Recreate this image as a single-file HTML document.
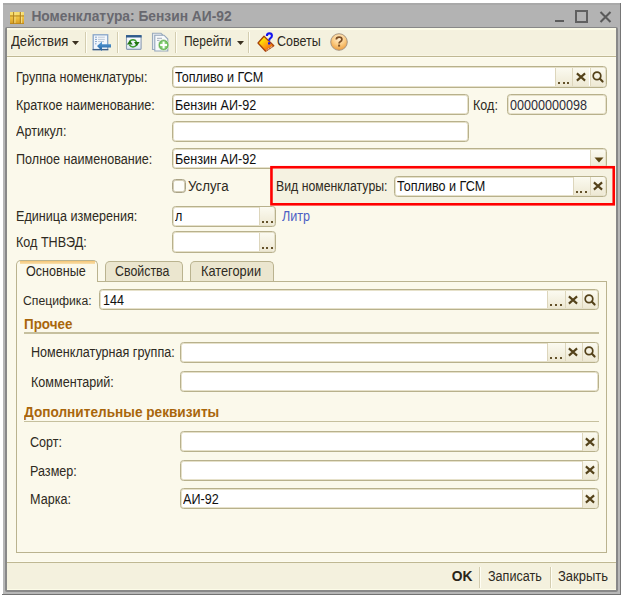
<!DOCTYPE html><html><head><meta charset="utf-8"><style>
html,body{margin:0;padding:0;width:623px;height:597px;overflow:hidden;background:#fff;}
body{position:relative;font-family:"Liberation Sans",sans-serif;}
#w{position:absolute;left:0;top:0;width:623px;height:597px;background:#fff;}
.a{position:absolute;box-sizing:border-box;}
.t{position:absolute;white-space:nowrap;transform-origin:0 0;}
.fld{border:1px solid #b8b18c;border-radius:3.5px;box-shadow:inset 0 0 0 1px #e6e1ca;}
.btn{background:linear-gradient(#fbfaf0,#eee9d4);border-left:1px solid #ddd6bc;}
.btn.last{border-radius:0 2px 2px 0;}
.dot{width:2px;height:2px;background:#64522a;}
</style></head><body><div id="w">
<div class="a" style="left:3px;top:3px;width:617px;height:591px;background:#b7b7b7;"></div>
<div class="a" style="left:620px;top:3px;width:1px;height:592px;background:#767676;"></div>
<div class="a" style="left:2px;top:594px;width:619px;height:1px;background:#727272;"></div>
<div class="a" style="left:3px;top:3px;width:617px;height:1.5px;background:#a9a9a9;"></div>
<div class="a" style="left:3px;top:4.5px;width:617px;height:22.5px;background:#b3b3b3;"></div>
<div class="a" style="left:5px;top:27px;width:613px;height:565px;background:#888888;border-radius:2px;"></div>
<div class="a" style="left:7px;top:28px;width:609px;height:562px;background:#fbf9eb;"></div>
<svg class="a" style="left:10px;top:12px" width="14" height="12" viewBox="0 0 14 12">
<defs><linearGradient id="ig" x1="0" y1="0" x2="0" y2="1"><stop offset="0" stop-color="#f4d45a"/><stop offset="0.5" stop-color="#eec040"/><stop offset="1" stop-color="#d49a20"/></linearGradient></defs>
<rect x="0" y="0" width="14" height="12" rx="0.8" fill="url(#ig)"/>
<rect x="0" y="0" width="14" height="3.2" fill="#f8e27a" opacity="0.7"/>
<rect x="3.2" y="0" width="1.1" height="12" fill="#a87818"/>
<rect x="4.3" y="0" width="1.2" height="12" fill="#fbe890" opacity="0.8"/>
<rect x="9.8" y="0" width="1.1" height="12" fill="#a87818"/>
<rect x="10.9" y="0" width="1.2" height="12" fill="#fbe890" opacity="0.8"/>
<rect x="0" y="3.4" width="14" height="1.1" fill="#b08420" opacity="0.9"/>
<rect x="0" y="11" width="14" height="1" fill="#b88418" opacity="0.8"/>
</svg>
<div class="t" style="left:31.40px;top:8.00px;font-size:13.80px;line-height:18px;height:18px;font-weight:bold;color:#68686f;transform:scaleX(1.0000);">Номенклатура: Бензин АИ-92</div>
<div class="a" style="left:554.5px;top:20.4px;width:9.5px;height:2.1000000000000014px;background:#5c5c5c;"></div>
<div class="a" style="left:575px;top:10.2px;width:12.700000000000045px;height:12.400000000000002px;border:2px solid #606060;"></div>
<svg class="a" style="left:599px;top:10.5px" width="13" height="12" viewBox="0 0 13 12"><path d="M1.5 1 L11.5 11 M11.5 1 L1.5 11" stroke="#5a5a5a" stroke-width="2.1"/></svg>
<div class="a" style="left:7px;top:28px;width:609px;height:28px;background:#f4f1de;"></div>
<div class="a" style="left:7px;top:28px;width:609px;height:1.5px;background:#fdfce8;"></div>
<div class="a" style="left:7px;top:55px;width:609px;height:1px;background:#f9f6e4;"></div>
<div class="a" style="left:7px;top:56px;width:609px;height:1px;background:#bfb893;"></div>
<div class="a" style="left:7px;top:57px;width:609px;height:1px;background:#fdfcf0;"></div>
<div class="t" style="left:10.80px;top:32.00px;font-size:14.67px;line-height:18px;height:18px;font-weight:normal;color:#2e2a22;transform:scaleX(0.8929);">Действия</div>
<svg class="a" style="left:72px;top:41px" width="7" height="4" viewBox="0 0 7 4"><path d="M0 0 L7 0 L3.5 4 Z" fill="#3a3020"/></svg>
<div class="a" style="left:84.5px;top:32px;width:1.0px;height:21px;background:#d4cdb0;"></div>
<div class="a" style="left:85.5px;top:32px;width:1.0px;height:21px;background:#fffef4;"></div>
<div class="a" style="left:117.0px;top:32px;width:1.0px;height:21px;background:#d4cdb0;"></div>
<div class="a" style="left:118.0px;top:32px;width:1.0px;height:21px;background:#fffef4;"></div>
<div class="a" style="left:175.0px;top:32px;width:1.0px;height:21px;background:#d4cdb0;"></div>
<div class="a" style="left:176.0px;top:32px;width:1.0px;height:21px;background:#fffef4;"></div>
<div class="a" style="left:248.3px;top:32px;width:1.0px;height:21px;background:#d4cdb0;"></div>
<div class="a" style="left:249.3px;top:32px;width:1.0px;height:21px;background:#fffef4;"></div>
<svg class="a" style="left:90px;top:32px" width="24" height="21" viewBox="0 0 24 21">
<defs><linearGradient id="ar" x1="0" y1="0" x2="0" y2="1"><stop offset="0" stop-color="#5aa0dc"/><stop offset="1" stop-color="#1f5f9e"/></linearGradient></defs>
<rect x="3.2" y="2.8" width="14.5" height="14.8" fill="#f3f7fc" stroke="#86a4c8" stroke-width="1.3"/>
<path d="M2.6 17.6 H18.3" stroke="#3e5f86" stroke-width="1.3"/>
<path d="M5.2 5.2h1.6M5.2 7.4h1.6M5.2 9.6h1.6M5.2 11.8h1.2" stroke="#6a90c0" stroke-width="1"/>
<path d="M8 5.2h6.8M8 7.4h6.8M8 9.6h6" stroke="#b7c4d4" stroke-width="0.9"/>
<path d="M7 14 L12 9.6 L12 12.2 L21 12.2 L21 15.5 L12 15.5 L12 19 Z" fill="url(#ar)"/>
</svg>
<svg class="a" style="left:123px;top:32px" width="22" height="21" viewBox="0 0 22 21">
<defs><linearGradient id="wb" x1="0" y1="0" x2="0" y2="1"><stop offset="0" stop-color="#ffffff"/><stop offset="1" stop-color="#dbe6f4"/></linearGradient></defs>
<rect x="3.5" y="3.6" width="14.6" height="13.8" rx="0.8" fill="url(#wb)" stroke="#8d9db2" stroke-width="1.1"/>
<rect x="3" y="3.1" width="15.6" height="2.4" fill="#2e5b8c"/>
<path d="M6.4 9.8 A4.2 4.2 0 0 1 13.6 9.8" stroke="#3c9a2c" stroke-width="1.4" fill="none"/>
<path d="M13.6 12.9 A4.2 4.2 0 0 1 6.4 12.9" stroke="#3c9a2c" stroke-width="1.4" fill="none"/>
<path d="M3.9 12.5 L6.8 8.2 L9.7 12.5 Z" fill="#217512"/>
<path d="M11 10 L13.8 14.3 L16.6 10 Z" fill="#217512"/>
</svg>
<svg class="a" style="left:149px;top:30px" width="23" height="23" viewBox="0 0 23 23">
<defs><radialGradient id="gp" cx="0.5" cy="0.5" r="0.55"><stop offset="0" stop-color="#b8eaa8"/><stop offset="0.6" stop-color="#7cc86a"/><stop offset="1" stop-color="#3f9435"/></radialGradient></defs>
<path d="M3.5 3.3 H12 L13.5 4.8 V19.5 H3.5 Z" fill="#e8edf2" stroke="#9aabbd" stroke-width="1.1"/>
<path d="M5.8 5.2 H15 L18.8 9 V21 H5.8 Z" fill="#f8fafc" stroke="#93a5b9" stroke-width="1.1"/>
<path d="M8 8.3h5M8 10.4h2.5" stroke="#8d9aab" stroke-width="0.8"/>
<circle cx="14.6" cy="15" r="5.4" fill="url(#gp)" stroke="#e4f0dc" stroke-width="0.8"/>
<path d="M14.6 11.6v6.8M11.2 15h6.8" stroke="#ffffff" stroke-width="2"/>
</svg>
<div class="t" style="left:183.70px;top:32.00px;font-size:14.00px;line-height:18px;height:18px;font-weight:normal;color:#2e2a22;transform:scaleX(0.8569);">Перейти</div>
<svg class="a" style="left:237px;top:41px" width="7" height="4" viewBox="0 0 7 4"><path d="M0 0 L7 0 L3.5 4 Z" fill="#3a3020"/></svg>
<svg class="a" style="left:254px;top:30px" width="24" height="24" viewBox="0 0 24 24">
<defs><linearGradient id="bk" x1="0.2" y1="0.2" x2="0.8" y2="0.9"><stop offset="0" stop-color="#fff000"/><stop offset="0.55" stop-color="#ffa010"/><stop offset="1" stop-color="#f06010"/></linearGradient></defs>
<path d="M4 13 L10 6.3 L19.8 15.6 L11.6 21.2 Z" fill="url(#bk)" stroke="#a8420a" stroke-width="1.3" stroke-linejoin="round"/>
<path d="M12.5 20.2 L19 15.9" stroke="#ffffff" stroke-width="1" stroke-dasharray="1 0.9"/>
<path d="M12.9 5.9 Q12.9 3.4 15.4 3.4 Q17.9 3.4 17.9 5.7 Q17.9 7.3 16.2 8.3 Q15.2 8.9 15.2 10.7" stroke="#1414f0" stroke-width="2.1" fill="none"/>
<rect x="14" y="12.2" width="2.4" height="2.3" rx="0.4" fill="#1414f0"/>
</svg>
<div class="t" style="left:276.60px;top:32.00px;font-size:14.00px;line-height:18px;height:18px;font-weight:normal;color:#2e2a22;transform:scaleX(0.8929);">Советы</div>
<svg class="a" style="left:330px;top:33.3px" width="18" height="18" viewBox="0 0 18 18">
<defs><radialGradient id="hg" cx="0.5" cy="0.3" r="0.7"><stop offset="0" stop-color="#fff0d6"/><stop offset="0.55" stop-color="#fbcb82"/><stop offset="1" stop-color="#ec9c3c"/></radialGradient></defs>
<circle cx="9" cy="9" r="8.3" fill="url(#hg)" stroke="#a09080" stroke-width="0.9"/>
<path d="M6.3 6.6 Q6.3 4.1 9.1 4.1 Q11.9 4.1 11.9 6.4 Q11.9 7.8 10.2 8.7 Q9.1 9.3 9.1 10.6" stroke="#7a4c22" stroke-width="1.7" fill="none"/>
<rect x="8.1" y="11.6" width="2" height="2" fill="#7a4c22"/>
</svg>
<div class="t" style="left:15.80px;top:68.00px;font-size:14.11px;line-height:18px;height:18px;font-weight:normal;color:#2e2a22;transform:scaleX(0.8929);">Группа номенклатуры:</div>
<div class="a fld" style="left:171.6px;top:66.2px;width:435.1px;height:21.39999999999999px;background:#ffffff"></div>
<div class="a btn" style="left:555.10px;top:67.7px;width:17.20px;height:18.39999999999999px"></div>
<div class="a dot" style="left:558.10px;top:82.00px"></div><div class="a dot" style="left:562.70px;top:82.00px"></div><div class="a dot" style="left:567.30px;top:82.00px"></div>
<div class="a btn" style="left:572.30px;top:67.7px;width:17.20px;height:18.39999999999999px"></div>
<svg class="a" style="left:574.90px;top:70.90px" width="12" height="12" viewBox="0 0 12 12"><path d="M1.9 2.4 L10.1 9.6 M10.1 2.4 L1.9 9.6" stroke="#54421a" stroke-width="2.1" fill="none"/></svg>
<div class="a btn last" style="left:589.50px;top:67.7px;width:15.70px;height:18.39999999999999px"></div>
<svg class="a" style="left:591.10px;top:69.90px" width="14" height="14" viewBox="0 0 14 14"><circle cx="6" cy="5.9" r="3.8" stroke="#54421a" stroke-width="1.7" fill="none"/><path d="M8.7 8.6 L11.6 11.6" stroke="#54421a" stroke-width="2.1" fill="none" stroke-linecap="round"/></svg>
<div class="t" style="left:175.00px;top:68.00px;font-size:14.11px;line-height:18px;height:18px;font-weight:normal;color:#101010;transform:scaleX(0.8929);">Топливо и ГСМ</div>
<div class="t" style="left:15.80px;top:96.00px;font-size:14.11px;line-height:18px;height:18px;font-weight:normal;color:#2e2a22;transform:scaleX(0.8929);">Краткое наименование:</div>
<div class="a fld" style="left:171.6px;top:94px;width:297.0px;height:21.299999999999997px;background:#ffffff"></div>
<div class="t" style="left:175.40px;top:96.00px;font-size:14.11px;line-height:18px;height:18px;font-weight:normal;color:#101010;transform:scaleX(0.8929);">Бензин АИ-92</div>
<div class="t" style="left:473.20px;top:96.00px;font-size:14.11px;line-height:18px;height:18px;font-weight:normal;color:#2e2a22;transform:scaleX(0.8929);">Код:</div>
<div class="a fld" style="left:506.5px;top:94.4px;width:100.20000000000005px;height:20.299999999999997px;background:#fcfaee"></div>
<div class="t" style="left:510.00px;top:96.00px;font-size:14.11px;line-height:18px;height:18px;font-weight:normal;color:#2e2e3a;transform:scaleX(0.8929);">00000000098</div>
<div class="t" style="left:15.60px;top:122.00px;font-size:14.11px;line-height:18px;height:18px;font-weight:normal;color:#2e2a22;transform:scaleX(0.8929);">Артикул:</div>
<div class="a fld" style="left:172px;top:121px;width:296.6px;height:20.5px;background:#ffffff"></div>
<div class="t" style="left:15.80px;top:150.00px;font-size:14.11px;line-height:18px;height:18px;font-weight:normal;color:#2e2a22;transform:scaleX(0.8929);">Полное наименование:</div>
<div class="a fld" style="left:171.6px;top:148.4px;width:435.29999999999995px;height:20.599999999999994px;background:#ffffff"></div>
<div class="a btn last" style="left:589.70px;top:149.9px;width:15.70px;height:17.599999999999994px"></div>
<svg class="a" style="left:592.70px;top:155.90px" width="12" height="8" viewBox="0 0 12 8"><path d="M1.5 1.5 L10.5 1.5 L6 6.5 Z" fill="#5a4512"/></svg>
<div class="t" style="left:175.40px;top:150.00px;font-size:14.11px;line-height:18px;height:18px;font-weight:normal;color:#101010;transform:scaleX(0.8929);">Бензин АИ-92</div>
<div class="a" style="left:171.8px;top:178.8px;width:14.199999999999989px;height:14.399999999999977px;background:#fdfdf9;border:1px solid #aaa386;border-radius:3.5px;box-shadow:inset 0 0 0 1px #d3cdb5;"></div>
<div class="t" style="left:188.20px;top:177.00px;font-size:14.90px;line-height:18px;height:18px;font-weight:normal;color:#2e2a22;transform:scaleX(0.8929);">Услуга</div>
<div class="a" style="left:271.5px;top:167.3px;width:342.20000000000005px;height:37.0px;background:#f5f2e1;"></div>
<div class="t" style="left:276.30px;top:178.00px;font-size:13.78px;line-height:18px;height:18px;font-weight:normal;color:#2e2a22;transform:scaleX(0.8929);">Вид номенклатуры:</div>
<div class="a fld" style="left:394px;top:175.7px;width:212.89999999999998px;height:21.0px;background:#ffffff"></div>
<div class="a btn" style="left:572.50px;top:177.2px;width:17.20px;height:18.0px"></div>
<div class="a dot" style="left:575.50px;top:191.10px"></div><div class="a dot" style="left:580.10px;top:191.10px"></div><div class="a dot" style="left:584.70px;top:191.10px"></div>
<div class="a btn last" style="left:589.70px;top:177.2px;width:15.70px;height:18.0px"></div>
<svg class="a" style="left:592.30px;top:180.20px" width="12" height="12" viewBox="0 0 12 12"><path d="M1.9 2.4 L10.1 9.6 M10.1 2.4 L1.9 9.6" stroke="#54421a" stroke-width="2.1" fill="none"/></svg>
<div class="t" style="left:397.00px;top:177.00px;font-size:14.11px;line-height:18px;height:18px;font-weight:normal;color:#101010;transform:scaleX(0.8929);">Топливо и ГСМ</div>
<div class="t" style="left:15.80px;top:207.00px;font-size:14.11px;line-height:18px;height:18px;font-weight:normal;color:#2e2a22;transform:scaleX(0.8929);">Единица измерения:</div>
<div class="a fld" style="left:171.6px;top:205.6px;width:104.4px;height:21.200000000000017px;background:#ffffff"></div>
<div class="a btn last" style="left:258.80px;top:207.1px;width:15.70px;height:18.200000000000017px"></div>
<div class="a dot" style="left:261.80px;top:221.20px"></div><div class="a dot" style="left:266.40px;top:221.20px"></div><div class="a dot" style="left:271.00px;top:221.20px"></div>
<div class="t" style="left:174.80px;top:207.00px;font-size:14.11px;line-height:18px;height:18px;font-weight:normal;color:#101010;transform:scaleX(0.8929);">л</div>
<div class="t" style="left:282.20px;top:207.00px;font-size:14.11px;line-height:18px;height:18px;font-weight:normal;color:#4d5fc4;transform:scaleX(0.8929);">Литр</div>
<div class="t" style="left:15.80px;top:233.00px;font-size:14.11px;line-height:18px;height:18px;font-weight:normal;color:#2e2a22;transform:scaleX(0.8929);">Код ТНВЭД:</div>
<div class="a fld" style="left:171.6px;top:231.4px;width:104.4px;height:21.599999999999994px;background:#ffffff"></div>
<div class="a btn last" style="left:258.80px;top:232.9px;width:15.70px;height:18.599999999999994px"></div>
<div class="a dot" style="left:261.80px;top:247.40px"></div><div class="a dot" style="left:266.40px;top:247.40px"></div><div class="a dot" style="left:271.00px;top:247.40px"></div>
<svg class="a" style="left:0;top:0" width="623" height="597" viewBox="0 0 623 597"><rect x="271.45" y="167.25" width="342.3" height="37.05" fill="none" stroke="#ff0000" stroke-width="2.6"/></svg>
<div class="a" style="left:16.4px;top:280.5px;width:590.6px;height:272.1px;border:1px solid #bab38f;background:#fbf9eb;"></div>
<div class="a" style="left:105.4px;top:260.6px;width:77.6px;height:20.399999999999977px;background:#ebe6cf;border:1px solid #bab38f;border-bottom:none;border-radius:5px 5px 0 0;"></div>
<div class="a" style="left:190px;top:260.6px;width:84px;height:20.399999999999977px;background:#ebe6cf;border:1px solid #bab38f;border-bottom:none;border-radius:5px 5px 0 0;"></div>
<div class="a" style="left:16.4px;top:260.4px;width:81.4px;height:21.600000000000023px;background:#fbf9eb;border:1px solid #bab38f;border-bottom:none;border-radius:5px 5px 0 0;"></div>
<div class="a" style="left:19.5px;top:261.4px;width:75.0px;height:2.2000000000000455px;background:linear-gradient(#f5c676,#f9e0ae);"></div>
<div class="t" style="left:26.30px;top:262.00px;font-size:14.11px;line-height:18px;height:18px;font-weight:normal;color:#2e2a22;transform:scaleX(0.8929);">Основные</div>
<div class="t" style="left:115.30px;top:262.00px;font-size:13.89px;line-height:18px;height:18px;font-weight:normal;color:#2e2a22;transform:scaleX(0.8929);">Свойства</div>
<div class="t" style="left:201.00px;top:262.00px;font-size:14.34px;line-height:18px;height:18px;font-weight:normal;color:#2e2a22;transform:scaleX(0.8929);">Категории</div>
<div class="t" style="left:23.00px;top:292.00px;font-size:13.66px;line-height:18px;height:18px;font-weight:normal;color:#2e2a22;transform:scaleX(0.8929);">Специфика:</div>
<div class="a fld" style="left:99.4px;top:289.4px;width:499.6px;height:20.600000000000023px;background:#ffffff"></div>
<div class="a btn" style="left:547.40px;top:290.9px;width:17.20px;height:17.600000000000023px"></div>
<div class="a dot" style="left:550.40px;top:304.40px"></div><div class="a dot" style="left:555.00px;top:304.40px"></div><div class="a dot" style="left:559.60px;top:304.40px"></div>
<div class="a btn" style="left:564.60px;top:290.9px;width:17.20px;height:17.600000000000023px"></div>
<svg class="a" style="left:567.20px;top:293.70px" width="12" height="12" viewBox="0 0 12 12"><path d="M1.9 2.4 L10.1 9.6 M10.1 2.4 L1.9 9.6" stroke="#54421a" stroke-width="2.1" fill="none"/></svg>
<div class="a btn last" style="left:581.80px;top:290.9px;width:15.70px;height:17.600000000000023px"></div>
<svg class="a" style="left:583.40px;top:292.70px" width="14" height="14" viewBox="0 0 14 14"><circle cx="6" cy="5.9" r="3.8" stroke="#54421a" stroke-width="1.7" fill="none"/><path d="M8.7 8.6 L11.6 11.6" stroke="#54421a" stroke-width="2.1" fill="none" stroke-linecap="round"/></svg>
<div class="t" style="left:103.00px;top:291.00px;font-size:14.11px;line-height:18px;height:18px;font-weight:normal;color:#101010;transform:scaleX(0.8929);">144</div>
<div class="t" style="left:23.70px;top:315.00px;font-size:13.94px;line-height:18px;height:18px;font-weight:bold;color:#a9660b;transform:scaleX(0.9615);">Прочее</div>
<div class="a" style="left:23.8px;top:332px;width:575.6px;height:1.5px;background:#c6c09e;"></div>
<div class="t" style="left:31.00px;top:343.00px;font-size:14.11px;line-height:18px;height:18px;font-weight:normal;color:#2e2a22;transform:scaleX(0.8929);">Номенклатурная группа:</div>
<div class="a fld" style="left:180px;top:341.7px;width:419px;height:21.100000000000023px;background:#ffffff"></div>
<div class="a btn" style="left:547.40px;top:343.2px;width:17.20px;height:18.100000000000023px"></div>
<div class="a dot" style="left:550.40px;top:357.20px"></div><div class="a dot" style="left:555.00px;top:357.20px"></div><div class="a dot" style="left:559.60px;top:357.20px"></div>
<div class="a btn" style="left:564.60px;top:343.2px;width:17.20px;height:18.100000000000023px"></div>
<svg class="a" style="left:567.20px;top:346.25px" width="12" height="12" viewBox="0 0 12 12"><path d="M1.9 2.4 L10.1 9.6 M10.1 2.4 L1.9 9.6" stroke="#54421a" stroke-width="2.1" fill="none"/></svg>
<div class="a btn last" style="left:581.80px;top:343.2px;width:15.70px;height:18.100000000000023px"></div>
<svg class="a" style="left:583.40px;top:345.25px" width="14" height="14" viewBox="0 0 14 14"><circle cx="6" cy="5.9" r="3.8" stroke="#54421a" stroke-width="1.7" fill="none"/><path d="M8.7 8.6 L11.6 11.6" stroke="#54421a" stroke-width="2.1" fill="none" stroke-linecap="round"/></svg>
<div class="t" style="left:31.00px;top:373.00px;font-size:14.11px;line-height:18px;height:18px;font-weight:normal;color:#2e2a22;transform:scaleX(0.8929);">Комментарий:</div>
<div class="a fld" style="left:180px;top:371.2px;width:419px;height:21.0px;background:#ffffff"></div>
<div class="t" style="left:23.70px;top:403.00px;font-size:13.92px;line-height:18px;height:18px;font-weight:bold;color:#a9660b;transform:scaleX(0.9804);">Дополнительные реквизиты</div>
<div class="a" style="left:23.8px;top:420.5px;width:575.6px;height:1.5px;background:#c6c09e;"></div>
<div class="t" style="left:29.70px;top:433.00px;font-size:14.11px;line-height:18px;height:18px;font-weight:normal;color:#2e2a22;transform:scaleX(0.8929);">Сорт:</div>
<div class="a fld" style="left:180px;top:431.4px;width:419px;height:20.700000000000045px;background:#ffffff"></div>
<div class="a btn last" style="left:581.80px;top:432.9px;width:15.70px;height:17.700000000000045px"></div>
<svg class="a" style="left:584.40px;top:435.75px" width="12" height="12" viewBox="0 0 12 12"><path d="M1.9 2.4 L10.1 9.6 M10.1 2.4 L1.9 9.6" stroke="#54421a" stroke-width="2.1" fill="none"/></svg>
<div class="t" style="left:30.20px;top:462.00px;font-size:14.11px;line-height:18px;height:18px;font-weight:normal;color:#2e2a22;transform:scaleX(0.8929);">Размер:</div>
<div class="a fld" style="left:180px;top:459.8px;width:419px;height:20.80000000000001px;background:#ffffff"></div>
<div class="a btn last" style="left:581.80px;top:461.3px;width:15.70px;height:17.80000000000001px"></div>
<svg class="a" style="left:584.40px;top:464.20px" width="12" height="12" viewBox="0 0 12 12"><path d="M1.9 2.4 L10.1 9.6 M10.1 2.4 L1.9 9.6" stroke="#54421a" stroke-width="2.1" fill="none"/></svg>
<div class="t" style="left:30.20px;top:490.00px;font-size:14.11px;line-height:18px;height:18px;font-weight:normal;color:#2e2a22;transform:scaleX(0.8929);">Марка:</div>
<div class="a fld" style="left:179.6px;top:488.3px;width:419.4px;height:21.19999999999999px;background:#ffffff"></div>
<div class="a btn last" style="left:581.80px;top:489.8px;width:15.70px;height:18.19999999999999px"></div>
<svg class="a" style="left:584.40px;top:492.90px" width="12" height="12" viewBox="0 0 12 12"><path d="M1.9 2.4 L10.1 9.6 M10.1 2.4 L1.9 9.6" stroke="#54421a" stroke-width="2.1" fill="none"/></svg>
<div class="t" style="left:182.60px;top:490.00px;font-size:14.11px;line-height:18px;height:18px;font-weight:normal;color:#101010;transform:scaleX(0.8929);">АИ-92</div>
<div class="a" style="left:7px;top:562px;width:609px;height:28px;background:#f4f1de;"></div>
<div class="a" style="left:7px;top:561px;width:609px;height:1px;background:#fdfcf0;"></div>
<div class="a" style="left:7px;top:562px;width:609px;height:1px;background:#bfb893;"></div>
<div class="a" style="left:7px;top:588.5px;width:609px;height:1.5px;background:#fdfce8;"></div>
<div class="t" style="left:451.80px;top:568.00px;font-size:13.80px;line-height:18px;height:18px;font-weight:bold;color:#2a2418;transform:scaleX(1.0000);">OK</div>
<div class="a" style="left:478.5px;top:567px;width:1.0px;height:21px;background:#d4cdb0;"></div>
<div class="a" style="left:479.5px;top:567px;width:1.0px;height:21px;background:#fffef4;"></div>
<div class="t" style="left:487.70px;top:567.00px;font-size:14.11px;line-height:18px;height:18px;font-weight:normal;color:#2e2a22;transform:scaleX(0.8929);">Записать</div>
<div class="a" style="left:549.8px;top:567px;width:1.0px;height:21px;background:#d4cdb0;"></div>
<div class="a" style="left:550.8px;top:567px;width:1.0px;height:21px;background:#fffef4;"></div>
<div class="t" style="left:558.40px;top:567.00px;font-size:14.56px;line-height:18px;height:18px;font-weight:normal;color:#2e2a22;transform:scaleX(0.8929);">Закрыть</div>
</div></body></html>
